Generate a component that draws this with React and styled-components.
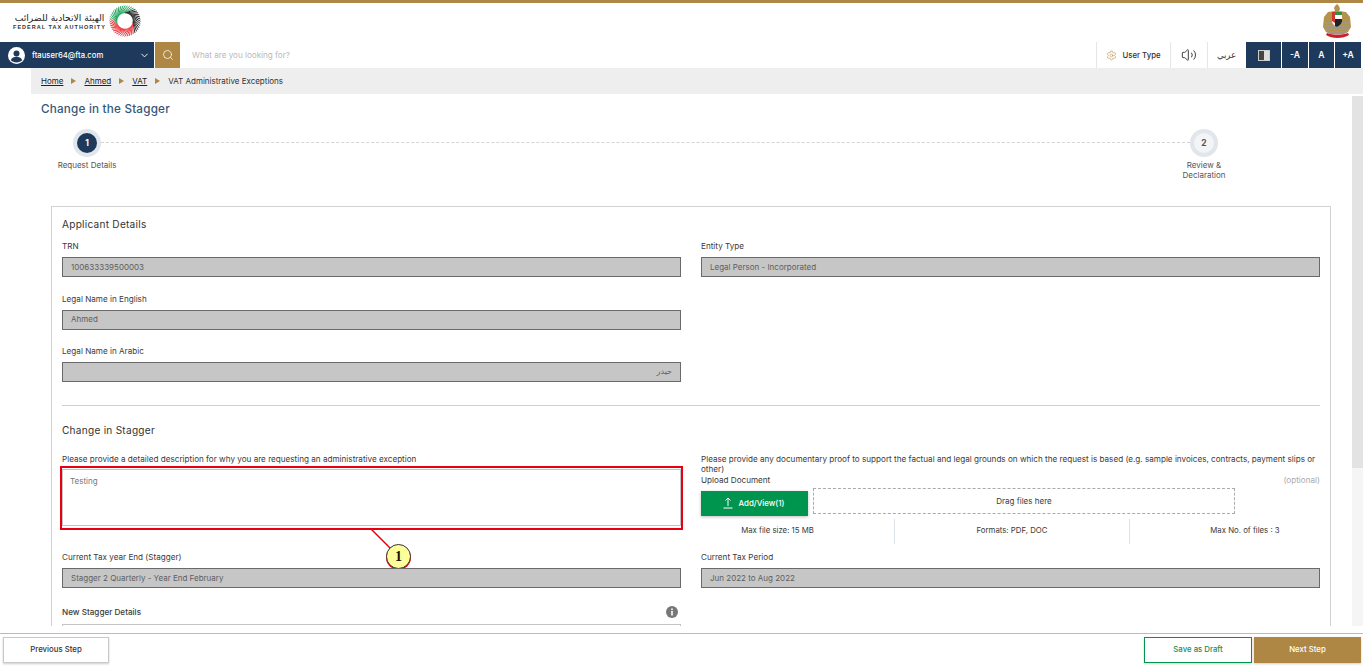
import React from "react";
import styled, { createGlobalStyle } from "styled-components";
import { ChevronDown, Search, Settings, Volume2 } from "lucide-react";

const GlobalStyle = createGlobalStyle`
  html, body { margin: 0; padding: 0; background: #fff; }
  body { font-family: Inter, "Noto Sans", "Liberation Sans", sans-serif; color: #444; }
  * { box-sizing: border-box; }
`;

const navy = "#1d3a5c";
const gold = "#ad8743";

const Page = styled.div`
  height: 666px;
  display: flex;
  flex-direction: column;
  overflow: hidden;
`;

const TopBar = styled.header`
  height: 42px;
  flex: none;
  border-top: 3px solid ${gold};
  display: flex;
  align-items: center;
  justify-content: space-between;
  padding: 0 11px 0 13px;
`;

const LogoWrap = styled.div`
  display: flex;
  align-items: center;
  gap: 3px;
  margin-top: -3px;
`;

const LogoText = styled.div`
  display: flex;
  flex-direction: column;
  align-items: stretch;
  width: 93px;
`;

const LogoArabic = styled.div`
  font-family: "DejaVu Sans", sans-serif;
  font-size: 9.2px;
  line-height: 11px;
  color: #222;
  text-align: center;
  white-space: nowrap;
`;

const LogoLatin = styled.div`
  font-family: "Liberation Sans", sans-serif;
  font-size: 5.5px;
  font-weight: 700;
  line-height: 8px;
  letter-spacing: 1.02px;
  color: #333;
  white-space: nowrap;
`;

const EmblemWrap = styled.div`
  display: flex;
  margin-top: -3px;
`;

const NavBar = styled.nav`
  height: 26px;
  flex: none;
  display: flex;
  align-items: stretch;
  padding-right: 1px;
`;

const Account = styled.div`
  width: 154px;
  background: ${navy};
  color: #fff;
  display: flex;
  align-items: center;
  padding: 0 4px 0 8px;
  font-size: 7.7px;
  font-weight: 500;
  gap: 7px;
  span { flex: 1; white-space: nowrap; }
`;

const SearchBtn = styled.button`
  width: 25px;
  margin-left: 1px;
  padding: 0;
  border: 0;
  background: ${gold};
  color: #fff;
  display: flex;
  align-items: center;
  justify-content: center;
`;

const SearchText = styled.div`
  flex: 1;
  display: flex;
  align-items: center;
  padding-left: 12px;
  font-size: 8.1px;
  color: #b9b9b9;
`;

const NavItem = styled.div`
  width: ${p => p.$w}px;
  margin-right: 1px;
  display: flex;
  align-items: center;
  justify-content: center;
  gap: 5px;
  font-size: 7.8px;
  font-weight: 500;
  color: #333;
  box-shadow: -1px 0 0 #e6e6e6;
  white-space: nowrap;
`;

const NavArabic = styled(NavItem)`
  font-family: "DejaVu Sans", sans-serif;
  font-weight: 400;
  font-size: 8.5px;
`;

const DarkItem = styled.div`
  width: ${p => p.$w}px;
  margin-right: 1px;
  background: ${navy};
  color: #fff;
  display: flex;
  align-items: center;
  justify-content: center;
  font-size: 8.6px;
  font-weight: 600;
`;

const ContrastIcon = styled.div`
  width: 12px;
  height: 11px;
  background: linear-gradient(90deg, #444 0 50%, #ddd 50% 100%);
  border: 1px solid #ccc;
`;

const Crumbs = styled.div`
  height: 26px;
  flex: none;
  margin-left: 31px;
  background: #eeeeee;
  display: flex;
  align-items: center;
  gap: 8px;
  padding-left: 10px;
  font-size: 8px;
  color: #333;
  a { color: #222; text-decoration: underline; }
  i { width: 0; height: 0; border-left: 5px solid ${gold}; border-top: 3px solid transparent; border-bottom: 3px solid transparent; }
`;

const Body = styled.div`
  flex: 1;
  min-height: 0;
  display: flex;
  padding-bottom: 7px;
`;

const Content = styled.main`
  flex: 1;
  min-width: 0;
  overflow: hidden;
`;

const Track = styled.div`
  width: 11px;
  margin-top: 2px;
  background: #f5f5f5;
`;

const Thumb = styled.div`
  height: 372px;
  background: #e3e3e3;
`;

const Title = styled.h1`
  margin: 9px 0 0 41px;
  font-size: 11.7px;
  line-height: 13px;
  font-weight: 500;
  letter-spacing: 0.2px;
  color: #34587a;
`;

const Stepper = styled.div`
  position: relative;
  display: flex;
  justify-content: space-between;
  margin: 13px 113px 0 52px;
  height: 77px;
`;

const Dots = styled.div`
  position: absolute;
  top: 13px;
  left: 49px;
  right: 49px;
  border-top: 1px dashed #d4d4d4;
`;

const Step = styled.div`
  width: 70px;
  display: flex;
  flex-direction: column;
  align-items: center;
  text-align: center;
  font-size: 8px;
  line-height: 10px;
  color: #555;
`;

const StepLabel = styled.div`
  width: 52px;
  white-space: ${p => (p.$wrap ? "normal" : "nowrap")};
  display: flex;
  justify-content: center;
  text-align: center;
`;

const StepCircle = styled.div`
  position: relative;
  width: 28px;
  height: 28px;
  margin-bottom: 3px;
  border-radius: 50%;
  border: 4px solid #e1e6ec;
  background: ${p => (p.$active ? navy : "#f2f4f6")};
  color: ${p => (p.$active ? "#fff" : "#555")};
  display: flex;
  align-items: center;
  justify-content: center;
  font-size: 8.5px;
  font-weight: 700;
`;

const Card = styled.section`
  margin: 0 21px 0 51px;
  border: 1px solid #d2d2d2;
  padding: 11px 10px 0;
`;

const SectionTitle = styled.h2`
  margin: 0;
  height: 13px;
  font-size: 10.1px;
  line-height: 13px;
  font-weight: 400;
  letter-spacing: 0.25px;
  color: #333;
`;

const Grid = styled.div`
  display: grid;
  grid-template-columns: 619px 619px;
  column-gap: 20px;
  margin-top: ${p => p.$top || 0}px;
`;

const Field = styled.div`
  position: relative;
  margin-bottom: 16.5px;
`;

const ExceptionField = styled.div`
  position: relative;
  height: 98px;
`;

const Label = styled.div`
  font-size: 8.15px;
  line-height: 11px;
  color: #3a3a3a;
  margin-bottom: ${p => p.$gap ?? 5}px;
  white-space: nowrap;
`;

const ReadOnly = styled.div`
  height: 20px;
  background: #c6c6c6;
  border: 1px solid #6a6a6a;
  display: flex;
  align-items: center;
  padding: 0 8px 1px;
  font-size: 8px;
  color: #5e5e5e;
  direction: ${p => (p.$rtl ? "rtl" : "ltr")};
  font-family: ${p => (p.$rtl ? '"DejaVu Sans", sans-serif' : "inherit")};
`;

const Divider = styled.hr`
  margin: 6.5px 0 18px;
  border: 0;
  border-top: 1px solid #cfcfcf;
`;

const TextArea = styled.div`
  height: 57px;
  border: 1px solid #c4c4c4;
  padding: 6px 7px;
  font-size: 8px;
  color: #777;
`;

const RedBox = styled.div`
  position: absolute;
  left: -2px;
  right: -2px;
  top: 12px;
  height: 64px;
  border: 2px solid #e60012;
  pointer-events: none;
`;

const CalloutLine = styled.svg`
  position: absolute;
  left: 309px;
  top: 75px;
`;

const CalloutBadge = styled.div`
  position: absolute;
  left: 324px;
  top: 90px;
  width: 25px;
  height: 25px;
  border-radius: 50%;
  background: #ffff99;
  border: 1.5px solid #333;
  box-shadow: 0 1px 0 #e60012;
  display: flex;
  align-items: center;
  justify-content: center;
  font-family: "Liberation Serif", serif;
  font-weight: 700;
  font-size: 14px;
  color: #111;
`;

const ProofText = styled.div`
  font-size: 8.15px;
  line-height: 9.5px;
  color: #3a3a3a;
  margin-top: 1px;
`;

const UploadLabel = styled.div`
  display: flex;
  justify-content: space-between;
  font-size: 8.15px;
  line-height: 11px;
  color: #3a3a3a;
  margin-top: 1px;
  em { font-style: normal; color: #aaa; }
`;

const UploadRow = styled.div`
  display: flex;
  align-items: flex-start;
  gap: 5px;
  margin-top: 1.5px;
`;

const AddButton = styled.button`
  width: 107px;
  height: 25px;
  margin-top: 3px;
  padding: 0 3px 0 0;
  border: 0;
  background: #00954f;
  color: #fff;
  display: flex;
  align-items: center;
  justify-content: center;
  gap: 5px;
  font: 500 7.9px Inter, sans-serif;
  box-shadow: 0 1px 3px rgba(0,0,0,.25);
`;

const DropZone = styled.div`
  width: 422px;
  height: 26px;
  border: 1px dashed #aaa;
  display: flex;
  align-items: center;
  justify-content: center;
  font-size: 8px;
  color: #3a3a3a;
`;

const Limits = styled.div`
  display: grid;
  grid-template-columns: 194px 235px 1fr;
  margin-top: 3px;
  height: 25px;
`;

const Limit = styled.div`
  display: flex;
  align-items: center;
  justify-content: center;
  padding-bottom: 2px;
  font-size: 7.8px;
  color: #3a3a3a;
  border-right: ${p => (p.$last ? "0" : "1px solid #dde3ea")};
  padding-right: ${p => p.$pr || 0}px;
  padding-left: ${p => p.$pl || 0}px;
`;

const DetailsHead = styled.div`
  display: flex;
  align-items: center;
  justify-content: space-between;
  height: 14px;
  padding-right: 3px;
  font-size: 8.15px;
  font-weight: 500;
  color: #3a3a3a;
`;

const DetailsBox = styled.div`
  width: 619px;
  height: 30px;
  margin-top: 5px;
  border: 1px solid #c4c4c4;
`;

const Footer = styled.footer`
  height: 33px;
  flex: none;
  border-top: 1px solid #b4bcc6;
  display: flex;
  align-items: center;
  padding: 0 2px 0 3px;
  gap: 2px;
`;

const FootBtn = styled.button`
  width: ${p => p.$w}px;
  height: 26px;
  padding: 0 0 2px;
  border: 1px solid ${p => p.$border};
  background: ${p => p.$bg};
  color: ${p => p.$color};
  font: 500 7.8px Inter, sans-serif;
  box-shadow: 0 1px 2px rgba(0,0,0,.2);
`;

const Spacer = styled.div`
  flex: 1;
`;

function stripColor(deg) {
  if (deg >= 312 || deg < 55) return "#2a2a2a";
  if (deg < 195) return "#ee3b3f";
  return "#22a860";
}

function FtaRing() {
  const strips = [];
  for (let i = 0; i < 44; i++) {
    const start = i * (360 / 44);
    const end = (start + 42) % 360;
    const a = (start * Math.PI) / 180;
    const b = (end * Math.PI) / 180;
    strips.push(
      <line
        key={i}
        x1={16 + 8 * Math.cos(a)}
        y1={16 + 8 * Math.sin(a)}
        x2={16 + 15.5 * Math.cos(b)}
        y2={16 + 15.5 * Math.sin(b)}
        stroke={stripColor(end)}
        strokeWidth="1"
      />
    );
  }
  return (
    <svg width="32" height="32" viewBox="0 0 32 32">
      {strips}
    </svg>
  );
}

function Emblem() {
  return (
    <svg width="29" height="35" viewBox="0 0 29 35">
      <path d="M14 0l2 2 1 3-1 2 7 1 4 5 1 10-3 5-4 2H7l-4-2-3-5 1-10 4-5 7-1-1-3 1-2z" fill="#b4934d" />
      <path d="M2 19h25M2 22h25M3 25h23M5 28h19" stroke="#9a9a8e" strokeWidth="1.5" />
      <path d="M9 8h10v9c0 3-3 5-5 6-2-1-5-3-5-6z" fill="#fff" />
      <path d="M9 8h3v11l-3-2z" fill="#d3342c" />
      <path d="M12 8h7v3h-7z" fill="#2f8f4e" />
      <path d="M12 15h7v2c0 3-3 5-5 6l-2-1z" fill="#222" />
      <path d="M4 29c6 2 15 2 21 0l1 2c-6 4-17 4-23 0z" fill="#c9202b" />
    </svg>
  );
}

function UserIcon() {
  return (
    <svg width="17" height="17" viewBox="0 0 17 17">
      <circle cx="8.5" cy="8.5" r="8.5" fill="#fff" />
      <circle cx="8.5" cy="6.400" r="3" fill={navy} />
      <path d="M2.800 13.200c1-2.600 3.200-3.400 5.700-3.400s4.700.8 5.700 3.400c-1.500 1.400-3.500 2.200-5.700 2.200s-4.200-.8-5.700-2.200z" fill={navy} />
    </svg>
  );
}

function UploadIcon() {
  return (
    <svg width="12" height="12" viewBox="0 0 12 12" fill="none" stroke="#fff" strokeWidth="1">
      <path d="M6 9V1M3.500 3.500L6 1l2.500 2.500M1.500 11h9" />
    </svg>
  );
}

function InfoIcon() {
  return (
    <svg width="12" height="12" viewBox="0 0 12 12">
      <circle cx="6" cy="6" r="6" fill="#777" />
      <rect x="5.200" y="5" width="1.600" height="4.500" fill="#fff" />
      <rect x="5.200" y="2.500" width="1.600" height="1.600" fill="#fff" />
    </svg>
  );
}

function ReadField({ label, value, rtl }) {
  return (
    <Field>
      <Label>{label}</Label>
      <ReadOnly $rtl={rtl}>{value}</ReadOnly>
    </Field>
  );
}

export default function App() {
  return (
    <Page>
      <GlobalStyle />
      <TopBar>
        <LogoWrap>
          <LogoText>
            <LogoArabic>الهيئة الاتحادية للضرائب</LogoArabic>
            <LogoLatin>FEDERAL TAX AUTHORITY</LogoLatin>
          </LogoText>
          <FtaRing />
        </LogoWrap>
        <EmblemWrap>
          <Emblem />
        </EmblemWrap>
      </TopBar>

      <NavBar>
        <Account>
          <UserIcon />
          <span>ftauser64@fta.com</span>
          <ChevronDown size={11} strokeWidth={2} />
        </Account>
        <SearchBtn aria-label="Search">
          <Search size={12} strokeWidth={1.5} />
        </SearchBtn>
        <SearchText>What are you looking for?</SearchText>
        <NavItem $w={73}>
          <Settings size={11} strokeWidth={1.2} color={gold} />
          User Type
        </NavItem>
        <NavItem $w={36}>
          <Volume2 size={16} strokeWidth={1.4} />
        </NavItem>
        <NavArabic $w={37}>عربي</NavArabic>
        <DarkItem $w={35}>
          <ContrastIcon />
        </DarkItem>
        <DarkItem $w={26}>-A</DarkItem>
        <DarkItem $w={25}>A</DarkItem>
        <DarkItem $w={26}>+A</DarkItem>
      </NavBar>

      <Crumbs>
        <a>Home</a>
        <i />
        <a>Ahmed</a>
        <i />
        <a>VAT</a>
        <i />
        <span>VAT Administrative Exceptions</span>
      </Crumbs>

      <Body>
        <Content>
          <Title>Change in the Stagger</Title>
          <Stepper>
            <Dots />
            <Step>
              <StepCircle $active>1</StepCircle>
              <StepLabel>Request Details</StepLabel>
            </Step>
            <Step>
              <StepCircle>2</StepCircle>
              <StepLabel $wrap>Review &amp; Declaration</StepLabel>
            </Step>
          </Stepper>

          <Card>
            <SectionTitle>Applicant Details</SectionTitle>
            <Grid $top={10}>
              <ReadField label="TRN" value="100633339500003" />
              <ReadField label="Entity Type" value="Legal Person - Incorporated" />
            </Grid>
            <Grid>
              <ReadField label="Legal Name in English" value="Ahmed" />
            </Grid>
            <Grid>
              <ReadField label="Legal Name in Arabic" value="حيدر" rtl />
            </Grid>
            <Divider />
            <SectionTitle>Change in Stagger</SectionTitle>
            <Grid $top={17}>
              <ExceptionField>
                <Label $gap={3.5}>
                  Please provide a detailed description for why you are requesting an administrative exception
                </Label>
                <TextArea>Testing</TextArea>
                <RedBox />
                <CalloutLine width="24" height="24" viewBox="0 0 24 24">
                  <line x1="0" y1="0" x2="20" y2="20" stroke="#e60012" strokeWidth="1.5" />
                </CalloutLine>
                <CalloutBadge>1</CalloutBadge>
              </ExceptionField>
              <div>
                <ProofText>
                  Please provide any documentary proof to support the factual and legal grounds on which the request is based (e.g. sample invoices, contracts, payment slips or other)
                </ProofText>
                <UploadLabel>
                  <span>Upload Document</span>
                  <em>(optional)</em>
                </UploadLabel>
                <UploadRow>
                  <AddButton>
                    <UploadIcon />
                    Add/View(1)
                  </AddButton>
                  <DropZone>Drag files here</DropZone>
                </UploadRow>
                <Limits>
                  <Limit $pr={40}>Max file size: 15 MB</Limit>
                  <Limit>Formats: PDF, DOC</Limit>
                  <Limit $last $pl={40}>Max No. of files : 3</Limit>
                </Limits>
              </div>
            </Grid>
            <Grid>
              <ReadField label="Current Tax year End (Stagger)" value="Stagger 2 Quarterly - Year End February" />
              <ReadField label="Current Tax Period" value="Jun 2022 to Aug 2022" />
            </Grid>
            <Grid>
              <DetailsHead>
                New Stagger Details
                <InfoIcon />
              </DetailsHead>
            </Grid>
            <DetailsBox />
          </Card>
        </Content>
        <Track>
          <Thumb />
        </Track>
      </Body>

      <Footer>
        <FootBtn $w={106} $border="#c9c9c9" $bg="#fff" $color="#333">Previous Step</FootBtn>
        <Spacer />
        <FootBtn $w={108} $border="#00954f" $bg="#fff" $color="#1b8a58">Save as Draft</FootBtn>
        <FootBtn $w={107} $border={gold} $bg={gold} $color="#fff">Next Step</FootBtn>
      </Footer>
    </Page>
  );
}
